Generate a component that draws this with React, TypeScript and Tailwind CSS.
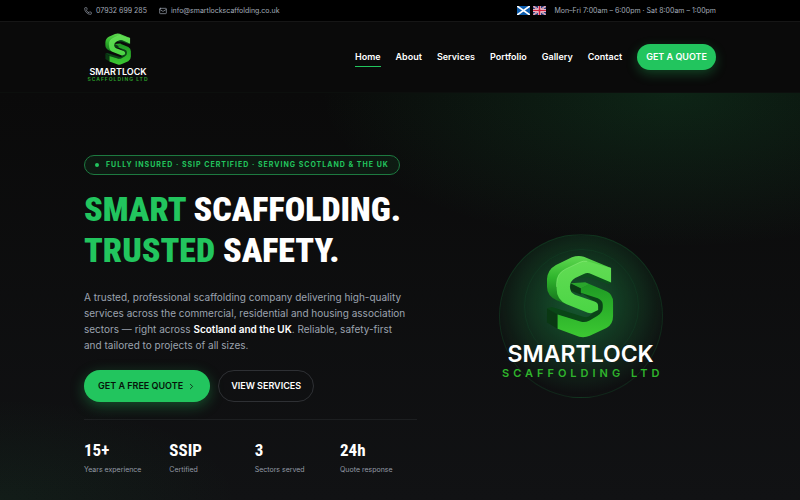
import { ChevronRight, Mail, Phone } from 'lucide-react'

const NAV = ['Home', 'About', 'Services', 'Portfolio', 'Gallery', 'Contact']

const STATS = [
  { value: '15+', label: 'Years experience' },
  { value: 'SSIP', label: 'Certified' },
  { value: '3', label: 'Sectors served' },
  { value: '24h', label: 'Quote response' },
]

function SaltireFlag() {
  return (
    <svg viewBox="0 0 26 18" className="h-[9px] w-[13px]" role="img" aria-label="Scotland">
      <rect width="26" height="18" fill="#0b5cad" />
      <path d="M0 0l26 18M26 0L0 18" stroke="#fff" strokeWidth="3.6" />
    </svg>
  )
}

function UnionFlag() {
  return (
    <svg viewBox="0 0 26 18" className="h-[9px] w-[13px]" role="img" aria-label="United Kingdom">
      <rect width="26" height="18" fill="#283a7a" />
      <path d="M0 0l26 18M26 0L0 18" stroke="#e0d8e4" strokeWidth="3.4" />
      <path d="M0 0l26 18M26 0L0 18" stroke="#d0405c" strokeWidth="1.2" />
      <path d="M13 0v18M0 9h26" stroke="#f1e6ec" strokeWidth="5.6" />
      <path d="M13 0v18M0 9h26" stroke="#cf1f3f" strokeWidth="3.2" />
    </svg>
  )
}

function LogoMark({ id, className }: { id: string; className?: string }) {
  return (
    <svg viewBox="200 104 206 250" className={className} aria-hidden="true">
      <defs>
        <linearGradient id={`${id}-face`} x1="0" y1="0" x2="0" y2="1">
          <stop offset="0" stopColor="#62dc54" />
          <stop offset="1" stopColor="#4bd545" />
        </linearGradient>
        <linearGradient id={`${id}-side`} x1="0" y1="0" x2="0" y2="1">
          <stop offset="0" stopColor="#5fd850" />
          <stop offset="0.45" stopColor="#2fb52c" />
          <stop offset="1" stopColor="#14701c" />
        </linearGradient>
        <linearGradient id={`${id}-lower`} x1="0" y1="0" x2="0" y2="1">
          <stop offset="0" stopColor="#1f9a24" />
          <stop offset="0.45" stopColor="#2bb02a" />
          <stop offset="1" stopColor="#3cc832" />
        </linearGradient>
      </defs>
      {/* lower ribbon: top surface, end cap and inner wall */}
      <path d="M203 265L218 261L312 290Q324 293 334 288L360 272L368 290L318 310L235 284Z" fill="#0a4517" />
      <path d="M203 265L235 283V326L203 307Z" fill="#0a3813" />
      <path d="M300 214L356 232L374 250V268L345 296L326 292L350 272L356 250Z" fill="#0a4517" />
      <path d="M274 189L306 204V224L274 211Z" fill="#0a3a14" />
      <path d="M274 189L318 186L332 192L306 205Z" fill="#2aa52c" />
      {/* lower ribbon, front face */}
      <path
        d="M305 204L330 191L382 213Q402 222 402 246V288Q402 314 382 324L332 347Q316 354 300 350L235 326V283L306 305Q318 308 330 302L354 288Q371 278 371 262V254Q371 240 356 234L305 218Z"
        fill={`url(#${id}-lower)`}
      />
      {/* upper ribbon */}
      <path d="M312 160L334 156L396 187L388 192L352 178Q336 170 322 170L300 174Z" fill="#0b4d1c" />
      <path
        d="M203 176Q205 148 230 134L278 111Q296 104 314 109L396 143L318 140L250 190L262 252L232 240Q203 228 203 200Z"
        fill={`url(#${id}-side)`}
      />
      <path
        d="M396 143V187L336 161Q325 156 314 161L288 173Q272 182 272 200Q272 217 287 224L346 244Q357 248 357 258V270L338 279Q332 280 326 278L262 252Q232 240 232 206V190Q232 160 258 147L302 126Q312 121 324 123Z"
        fill={`url(#${id}-face)`}
      />
      <path d="M232 200V190Q232 160 258 147L302 126Q312 121 324 123" fill="none" stroke="#a4f58f" strokeWidth="2" opacity="0.6" />
    </svg>
  )
}

export default function App() {
  return (
    <div className="flex min-h-screen flex-col bg-[#0a0a0a] font-['Inter',sans-serif] text-white">
      <div className="border-b border-[#161616] bg-black">
        <div className="mx-auto flex h-[21px] max-w-[632px] items-center justify-between text-[7px] leading-3 text-[#a3abb8]">
          <div className="flex items-center gap-3">
            <a href="tel:07932699285" className="flex items-center gap-1">
              <Phone size={8} />
              07932 699 285
            </a>
            <a href="mailto:info@smartlockscaffolding.co.uk" className="flex items-center gap-1">
              <Mail size={8} />
              info@smartlockscaffolding.co.uk
            </a>
          </div>
          <div className="flex items-center gap-2">
            <span className="flex gap-[3px]">
              <SaltireFlag />
              <UnionFlag />
            </span>
            <span>Mon–Fri 7:00am – 6:00pm · Sat 8:00am – 1:00pm</span>
          </div>
        </div>
      </div>

      <header className="border-b border-[#0c0f0d]">
        <div className="mx-auto flex h-[70px] max-w-[632px] items-center justify-between">
          <a href="#home" className="flex w-[68px] flex-col items-center">
            <LogoMark id="nav" className="h-8" />
            <span className="mt-[3px] text-[9px] leading-[8px] font-semibold">SMARTLOCK</span>
            <span className="text-[5px] leading-[6px] font-semibold tracking-[1px] whitespace-nowrap text-[#2ba52a]">
              SCAFFOLDING LTD
            </span>
          </a>
          <nav className="flex items-center gap-[15px] text-[9px] leading-[14px] font-semibold">
            {NAV.map((item) => (
              <a
                key={item}
                href={`#${item.toLowerCase()}`}
                className={
                  item === 'Home' ? 'border-y border-t-transparent border-b-[#22c55e] py-[2px]' : 'py-[3px]'
                }
              >
                {item}
              </a>
            ))}
            <a
              href="#quote"
              className="rounded-full bg-[#22c55e] px-[9px] py-[6px] shadow-[0_4px_12px_rgba(34,197,94,0.3)]"
            >
              GET A QUOTE
            </a>
          </nav>
        </div>
      </header>

      <main className="flex grow flex-col bg-[radial-gradient(ellipse_44%_38%_at_84%_0%,rgba(34,197,94,0.14),transparent),radial-gradient(ellipse_30%_25%_at_0%_100%,rgba(34,197,94,0.06),transparent),linear-gradient(#0a0a0a,#111214)]">
        <div className="mx-auto grid w-full max-w-[632px] grid-cols-[minmax(0,1.25fr)_minmax(0,1fr)] items-center gap-8 pt-[62px] pb-5">
          <section>
            <p className="flex w-fit items-center gap-[7px] rounded-full border border-[#1d7a40] bg-[#22c55e]/8 px-[10px] py-[3px] text-[7px] leading-3 font-bold tracking-[1px] whitespace-nowrap text-[#22c55e]">
              <span className="size-1 rounded-full bg-[#22c55e]" />
              FULLY INSURED · SSIP CERTIFIED · SERVING SCOTLAND &amp; THE UK
            </p>
            <h1 className="mt-[14px] font-['Roboto_Condensed','Liberation_Sans_Narrow',sans-serif] text-[34px] leading-[41px] font-black whitespace-nowrap">
              <span className="text-[#22c55e]">SMART</span> SCAFFOLDING.
              <br />
              <span className="text-[#22c55e]">TRUSTED</span> SAFETY.
            </h1>
            <p className="mt-[18px] max-w-[326px] text-[10px] leading-4 text-[#9ca3af]">
              A trusted, professional scaffolding company delivering high-quality services across the commercial,
              residential and housing association sectors — right across{' '}
              <strong className="font-semibold text-white">Scotland and the UK</strong>. Reliable, safety-first and
              tailored to projects of all sizes.
            </p>
            <div className="mt-[17px] flex gap-2 text-[9px] leading-[14px] font-semibold">
              <a
                href="#quote"
                className="flex items-center gap-1 rounded-full bg-[#22c55e] px-[14px] py-[9px] text-[#06130a] shadow-[0_4px_14px_rgba(34,197,94,0.35)]"
              >
                GET A FREE QUOTE
                <ChevronRight size={9} />
              </a>
              <a href="#services" className="rounded-full border border-[#2e3034] px-3 py-2">
                VIEW SERVICES
              </a>
            </div>
            <dl className="mt-[17px] grid grid-cols-4 gap-2 border-t border-[#1d1f21] pt-5">
              {STATS.map((s) => (
                <div key={s.label} className="flex flex-col-reverse">
                  <dt className="mt-1 text-[7px] leading-3 text-[#949ba6]">{s.label}</dt>
                  <dd className="font-['Roboto_Condensed','Liberation_Sans_Narrow',sans-serif] text-[17px] leading-5 font-bold">
                    {s.value}
                  </dd>
                </div>
              ))}
            </dl>
          </section>

          <div className="grid place-items-center pr-1">
            <div className="relative flex size-[164px] flex-col items-center rounded-full border border-[#22c55e]/12 bg-[radial-gradient(circle_at_50%_42%,rgba(34,197,94,0.42),rgba(34,197,94,0.18)_42%,transparent_74%)] pt-5">
              <span className="absolute top-[14px] left-6 size-[115px] rounded-full border border-[#22c55e]/6" />
              <LogoMark id="hero" className="relative h-[83px] shrink-0" />
              <span className="mt-[5px] text-[23px] leading-[22px] font-semibold">SMARTLOCK</span>
              <span className="mt-[2px] pl-1 text-[11px] leading-3 font-semibold tracking-[4px] whitespace-nowrap text-[#2fb52c]">
                SCAFFOLDING LTD
              </span>
            </div>
          </div>
        </div>
      </main>
    </div>
  )
}
